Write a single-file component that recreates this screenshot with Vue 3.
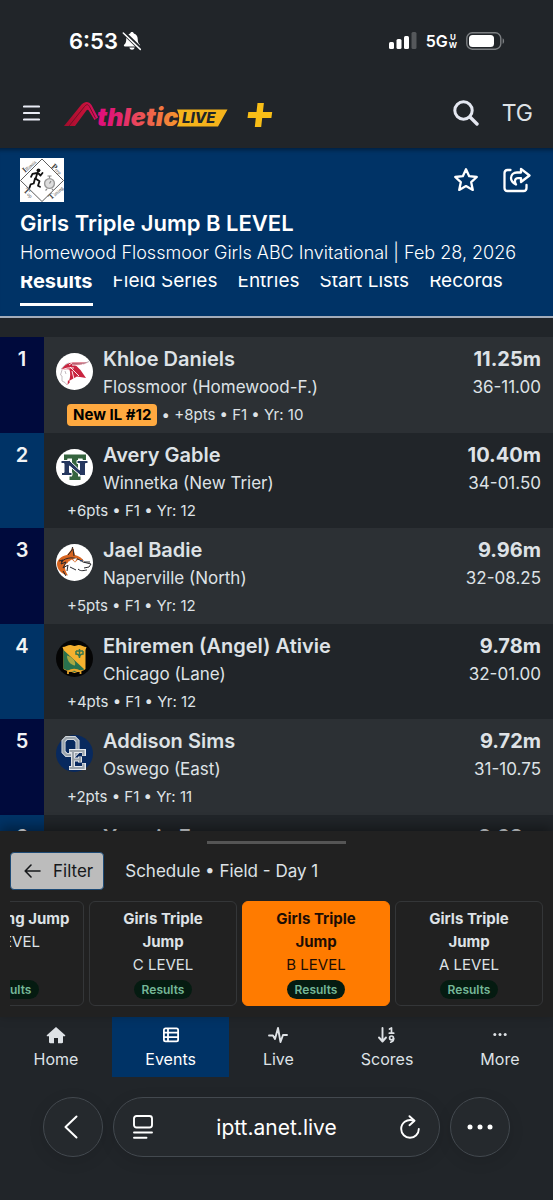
<template>
  <div class="screen">
    <!-- Phone status bar -->
    <div class="status-bar">
      <div class="status-time">
        <span>6:53</span>
        <svg width="20" height="20" viewBox="0 0 20 20" aria-hidden="true">
          <path d="M10 1c.9 0 1.600.6 1.800 1.400 2.500.7 3.900 2.700 3.900 5.300 0 3.500.8 4.700 2 5.800.8.8.5 2-.7 2H3c-1.200 0-1.500-1.200-.7-2 1.200-1.100 2-2.300 2-5.800 0-2.600 1.400-4.600 3.900-5.300C8.400 1.600 9.100 1 10 1z" fill="#fff" />
          <path d="M7.400 16.600h5.200c-.3 1.400-1.300 2.200-2.600 2.200s-2.300-.8-2.600-2.200z" fill="#fff" />
          <path d="M1.400 1.200l17.400 17" stroke="#212529" stroke-width="4" />
          <path d="M1.300 2l17 16.400" stroke="#fff" stroke-width="1.500" stroke-linecap="round" />
        </svg>
      </div>
      <div class="status-signals">
        <svg width="28" height="18" viewBox="0 0 28 18" aria-hidden="true">
          <rect x="0" y="10" width="5" height="7" rx="1.500" fill="#fff" />
          <rect x="7.500" y="7" width="5" height="10" rx="1.500" fill="#fff" />
          <rect x="15" y="4" width="5" height="13" rx="1.500" fill="#fff" />
          <rect x="22.500" y="0" width="5" height="17" rx="1.500" fill="#55585b" />
        </svg>
        <span class="network">5G<span class="network-band"><span>U</span><span>W</span></span></span>
        <svg width="39" height="18" viewBox="0 0 39 18" aria-hidden="true">
          <rect x=".8" y=".8" width="34" height="16.400" rx="5.500" fill="none" stroke="#7c7f82" stroke-width="1.400" />
          <rect x="3" y="3" width="25" height="12" rx="3.500" fill="#fff" />
          <path d="M36.600 6.200c2 .6 2 5 0 5.600z" fill="#7c7f82" />
        </svg>
      </div>
    </div>

    <!-- App bar -->
    <header class="app-bar">
      <button type="button" class="icon-btn" aria-label="Menu">
        <svg width="17" height="16" viewBox="0 0 17 16">
          <path d="M1 1.500h15M1 8h15M1 14.500h15" stroke="#e9ecf5" stroke-width="2.200" stroke-linecap="round" />
        </svg>
      </button>
      <a href="#" class="brand" aria-label="AthleticLIVE home">
        <svg width="165" height="28" viewBox="0 0 165 28">
          <defs>
            <linearGradient id="wordmark" x1="32" x2="116" y1="0" y2="0" gradientUnits="userSpaceOnUse">
              <stop offset="0" stop-color="#df0b7d" />
              <stop offset=".25" stop-color="#e01f72" />
              <stop offset=".6" stop-color="#ee5b50" />
              <stop offset="1" stop-color="#f69a2b" />
            </linearGradient>
            <linearGradient id="peak" x1="0" x2="34" y1="0" y2="0" gradientUnits="userSpaceOnUse">
              <stop offset="0" stop-color="#a00d2c" />
              <stop offset=".6" stop-color="#c41238" />
              <stop offset="1" stop-color="#d80f6c" />
            </linearGradient>
          </defs>
          <path d="M0 25L17.500 3.500C21 -.2 25 .2 27.500 4L34 16.500l-3.500 2.500-5.500-9c-.8-1.600-1.900-1.600-3 0L11 25z" fill="url(#peak)" />
          <path d="M5 25L20.500 5.500c2-2.500 3.500-2.500 4.900 0l6.300 12" fill="none" stroke="#701027" stroke-width="1" />
          <text x="33" y="25" class="wordmark" fill="url(#wordmark)">thletic</text>
          <path d="M113 8.500h50.500L154 25.500h-41q4.500-8 0-17z" fill="#f5b31b" />
          <text x="118" y="22" class="wordmark-live" fill="#212529">LIVE</text>
        </svg>
      </a>
      <button type="button" class="icon-btn plus-btn" aria-label="Plus">
        <svg width="26" height="26" viewBox="0 0 26 26">
          <path d="M10.500 1h6.400l-1 9h9.300l-.8 6h-9.200l-1 9H7.800l1-9H.5l.8-6h8.200z" fill="#f8be17" />
        </svg>
      </button>
      <button type="button" class="icon-btn search-btn" aria-label="Search">
        <svg width="26" height="26" viewBox="0 0 26 26">
          <circle cx="10.500" cy="10.500" r="8.700" fill="none" stroke="#e4e7f0" stroke-width="3" />
          <path d="M17 17l7 7" stroke="#e4e7f0" stroke-width="3.400" stroke-linecap="round" />
        </svg>
      </button>
      <button type="button" class="icon-btn user-btn">TG</button>
    </header>

    <!-- Event header -->
    <section class="event-header">
      <div class="event-top">
        <svg class="meet-logo" width="44" height="44" viewBox="0 0 44 44" aria-label="Illinois Prep Top Timing">
          <rect width="44" height="44" fill="#fff" />
          <path d="M22 1l21.500 21.500L22 43.500.5 22.500z" fill="none" stroke="#333" stroke-width=".8" />
          <text class="meet-text" transform="translate(5 15) rotate(-42)"><tspan class="meet-initial">I</tspan>llinois</text>
          <text class="meet-text" transform="translate(31 9) rotate(43)"><tspan class="meet-initial">P</tspan>rep</text>
          <text class="meet-text" transform="translate(3 33) rotate(45)"><tspan class="meet-initial">T</tspan>op</text>
          <text class="meet-text" transform="translate(31 42) rotate(-42)"><tspan class="meet-initial">T</tspan>iming</text>
          <circle cx="18.500" cy="12.300" r="1.900" fill="#111" />
          <path d="M17.500 14.500l-2 6.500M17 15l-4.500.8-1.500 3M18 15l2.500 2.500 2-2.500M15.500 20.500l4 2.800-1.500 4.500 2 1M15 20.500l-1.300 5-3 .8-1.200 3.500" fill="none" stroke="#111" stroke-width="1.800" stroke-linejoin="round" stroke-linecap="round" />
          <circle cx="29.500" cy="25.500" r="4.900" fill="#ddd" stroke="#999" stroke-width="1.400" />
          <path d="M29.500 20v-2M27.500 18h4M29.500 25.500l1.500-2.500M27 31l-1.500 1.500M32 31l1.500 1.500" stroke="#888" stroke-width="1.200" />
        </svg>
        <div class="event-actions">
          <button type="button" class="icon-btn" aria-label="Favorite">
            <svg width="26" height="26" viewBox="0 0 26 26">
              <path d="M13 2.200l3.200 7 7.600.8-5.600 5.200 1.600 7.700L13 19.100l-6.800 3.800 1.600-7.700L2.200 10l7.600-.8z" fill="none" stroke="#fff" stroke-width="2.300" stroke-linejoin="round" />
            </svg>
          </button>
          <button type="button" class="icon-btn" aria-label="Share">
            <svg width="28" height="26" viewBox="0 0 28 26" fill="none" stroke="#fff" stroke-width="2.300" stroke-linecap="round" stroke-linejoin="round">
              <path d="M7.500 3H4.500C2.500 3 1.500 4 1.500 6v15c0 2 1 3 3 3h16c2 0 3-1 3-3v-3" />
              <path d="M18 1.800L26.500 8.500 18 15v-3.800h-3c-3 0-4 2.800-2 6.300-3.500-1.800-5-4-5-6.500C8 8 10.500 5.500 14 5.500h4z" />
            </svg>
          </button>
        </div>
      </div>
      <h1 class="event-title">Girls Triple Jump B LEVEL</h1>
      <p class="event-subtitle">Homewood Flossmoor Girls ABC Invitational | Feb 28, 2026</p>
      <nav class="event-tabs" aria-label="Event sections">
        <a
          v-for="tab in tabs"
          :key="tab"
          href="#"
          class="event-tab"
          :class="{ active: tab === activeTab }"
          @click.prevent="activeTab = tab"
        >{{ tab }}</a>
      </nav>
    </section>

    <!-- Results -->
    <main class="results">
      <article v-for="row in results" :key="row.place" class="result">
        <div class="place">{{ row.place }}</div>
        <div class="result-body">
          <div class="result-main">
            <svg class="avatar" width="37" height="37" viewBox="0 0 37 37" aria-hidden="true">
              <template v-if="row.logo === 'viking'">
                <circle cx="18.500" cy="18.500" r="18.500" fill="#fff" />
                <path d="M5.500 17c2-5 7-8 13-7.500 5 .2 10 .2 14-.6-3 2.600-8 3.400-13 3.200l5 5 5.500 8-9-1.500-8 4.500c1.500-4 1.500-8 .5-11.500-3-.6-5.500-.5-8 .4z" fill="#c9243f" />
                <path d="M5 17.500c4-2.500 8-3 13-2.500M16 12c7 .5 12 0 17-3M14 14l9 9M16 18l2 8M13 12l3-2" stroke="#fff" stroke-width=".9" fill="none" />
                <path d="M6 17l-1.500 5 1.500 1v5l3 1.500 2 2.500M9 18l1 3M5 16c3-3 4-5 8-6M16 11c7 0 12 0 17-2.500" stroke="#b5aab0" stroke-width=".8" fill="none" />
                <path d="M12 27l2 2-2.500 3z" fill="#c9243f" />
              </template>
              <template v-else-if="row.logo === 'trier'">
                <circle cx="18.500" cy="18.500" r="18.500" fill="#fff" />
                <path d="M8 5.500h22v6h-3l-.5-2H22v18h2.500V31h-11v-3.500H16v-18h-4.500l-.5 2H8z" fill="#35643f" />
                <path d="M5 11.500h8.500l10 9.500v-6.500h-2.500v-3h11v3h-2.500v12h-5L13.500 17v6.500H16v3H5.500v-3H8v-9H5z" fill="#25375f" stroke="#fff" stroke-width="1" />
              </template>
              <template v-else-if="row.logo === 'husky'">
                <circle cx="18.500" cy="18.500" r="18.500" fill="#fff" />
                <path d="M1 20c0-4 4-8 10-9l4-5 2-3 2 8c4 1 7 3 9 6l-6-1.500-3 3-3-3c-3 1-4 3-2 5l-4-1c-2 3-1 7 2 12C5 30 1 25 1 20z" fill="#d86520" />
                <path d="M12 11l4-5 .5-3M17 5l1 7M5 18c5-5 14-6 22 0l8 2-2 3-5 1M3 17l4-1-2 4 5-2-3 6 5-3-1 6M22 25c3 3 7 1 9 1M14 23l6 3M7 27l3 5M28 18h6" stroke="#26262b" stroke-width="1" fill="none" />
                <path d="M17 15l4-1-2 4zM10 21l3-4 1 3z" fill="#fff" />
                <path d="M24 17l3-1" stroke="#2d4a7c" stroke-width="1" />
              </template>
              <template v-else-if="row.logo === 'shield'">
                <circle cx="18.500" cy="18.500" r="18.500" fill="#050505" />
                <path d="M6.500 7c3 0 5-2 8-2 2 0 2 1 4 1s2-1 4-1c3 0 5 2 8 2l-1 3v19c-3 3-7 2-11 4-4-2-7-1-11-4V10z" fill="#f5b12f" />
                <path d="M7.500 10l21 19.500c-3 1-6 .8-10 2.500-3.500-1.500-7-.5-11-3.500z" fill="#28714e" />
                <path d="M11 15.500c6 2 9 6 8 10-4-.5-8-4-8-10z" fill="#a9a842" />
                <path d="M20 11h7M23.500 9v9M20 11v3q3 0 3.500 3 .5-3 3.500-3v-3" fill="none" stroke="#36754d" stroke-width="1.500" />
                <path d="M12 34v-2.500q6-3.500 12.500 0V34" fill="none" stroke="#e9a52c" stroke-width="1.800" />
              </template>
              <template v-else-if="row.logo === 'oswego'">
                <circle cx="18.500" cy="18.500" r="18.500" fill="#08295e" />
                <path d="M10.500 3h8l3 3v11l-3 3h-8l-3-3V6z" fill="none" stroke="#e5e8ed" stroke-width="4" />
                <path d="M10.500 3h8l3 3v11l-3 3h-8l-3-3V6z" fill="none" stroke="#9aa3ab" stroke-width="2.400" />
                <path d="M13 16h15v5M13 33h15v-5M17 16v17M17 24.500h7m0-3v6" fill="none" stroke="#e5e8ed" stroke-width="4" />
                <path d="M13.500 16h14v4.500M13.500 33h14v-4.500M17 16v17M17 24.500h7m0-2.500v5" fill="none" stroke="#9aa3ab" stroke-width="2.200" />
              </template>
            </svg>
            <div class="athlete">
              <div class="athlete-name">{{ row.name }}</div>
              <div class="athlete-school">{{ row.school }}</div>
            </div>
            <div class="marks">
              <div class="mark">{{ row.mark }}</div>
              <div class="mark-alt">{{ row.alt }}</div>
            </div>
          </div>
          <div class="meta">
            <template v-if="row.badge"><span class="badge">{{ row.badge }}</span> • </template>{{ row.meta }}
          </div>
        </div>
      </article>
    </main>

    <!-- Schedule drawer -->
    <section class="drawer">
      <div class="drawer-handle"></div>
      <div class="drawer-head">
        <button type="button" class="filter-btn">
          <svg width="17" height="14" viewBox="0 0 17 14" aria-hidden="true">
            <path d="M16 7H1.500M7 1L1.200 7 7 13" fill="none" stroke="#16181b" stroke-width="1.600" stroke-linecap="round" stroke-linejoin="round" />
          </svg>
          Filter
        </button>
        <span class="drawer-title">Schedule • Field - Day 1</span>
      </div>
      <div class="cards">
        <a
          v-for="card in schedule"
          :key="card.event + card.level"
          href="#"
          class="card"
          :class="{ current: card.current }"
        >
          <span class="card-event">{{ card.event }}</span>
          <span class="card-level">{{ card.level }}</span>
          <span class="card-status">Results</span>
        </a>
      </div>
    </section>

    <!-- Bottom navigation -->
    <nav class="bottom-nav" aria-label="Main">
      <a v-for="item in navItems" :key="item.label" href="#" class="nav-item" :class="{ active: item.active }">
        <svg width="20" height="18" viewBox="0 0 20 18" aria-hidden="true">
          <path v-if="item.icon === 'home'" d="M10 1l9 8c.6.6.3 1.300-.5 1.300H17V16c0 .8-.4 1.200-1.200 1.200H12V12H8v5.200H4.200C3.400 17.200 3 16.800 3 16v-5.700H1.500C.7 10.300.4 9.600 1 9z" fill="currentColor" />
          <template v-else-if="item.icon === 'table'">
            <rect x="2.900" y="2.400" width="14.200" height="13" rx="1.600" fill="none" stroke="currentColor" stroke-width="1.800" />
            <path d="M3 6.700h14M3 11.100h14M7 3v12" stroke="currentColor" stroke-width="1.800" />
          </template>
          <path v-else-if="item.icon === 'pulse'" d="M1 9.500h4l2 3.500 3-11 2.500 14 2.500-7h4" fill="none" stroke="currentColor" stroke-width="1.900" stroke-linecap="round" stroke-linejoin="round" />
          <template v-else-if="item.icon === 'sort'">
            <path d="M5.500 2v13M2 11.500L5.500 15.500 9 11.500" fill="none" stroke="currentColor" stroke-width="1.900" stroke-linecap="round" stroke-linejoin="round" />
            <path d="M12.500 3l2-1v5M12.300 7.200h4.400M16.700 12.500c0 2-1.200 3.200-3 3.700" fill="none" stroke="currentColor" stroke-width="1.700" stroke-linecap="round" stroke-linejoin="round" />
            <circle cx="14.500" cy="11.900" r="1.900" fill="none" stroke="currentColor" stroke-width="1.700" />
          </template>
          <template v-else>
            <circle cx="4.800" cy="8.500" r="1.500" fill="currentColor" />
            <circle cx="10" cy="8.500" r="1.500" fill="currentColor" />
            <circle cx="15.200" cy="8.500" r="1.500" fill="currentColor" />
          </template>
        </svg>
        <span>{{ item.label }}</span>
      </a>
    </nav>

    <!-- Browser controls -->
    <div class="browser-bar">
      <button type="button" class="round-btn" aria-label="Back">
        <svg width="18" height="26" viewBox="0 0 18 26">
          <path d="M12.500 2.500L1.500 13l11 10.500" fill="none" stroke="#fff" stroke-width="2" stroke-linecap="round" stroke-linejoin="round" />
        </svg>
      </button>
      <div class="address">
        <button type="button" class="icon-btn" aria-label="Page options">
          <svg width="20" height="24" viewBox="0 0 20 24" fill="none" stroke="#fff" stroke-width="1.900" stroke-linecap="round">
            <rect x="1" y="1" width="18" height="11.500" rx="2.500" />
            <path d="M1 17.500h18M1 22.800h12.500" />
          </svg>
        </button>
        <input v-model="address" type="text" class="address-input" aria-label="Address" />
        <button type="button" class="icon-btn" aria-label="Reload">
          <svg width="20" height="24" viewBox="0 0 20 24" fill="none" stroke="#fff" stroke-width="1.900" stroke-linecap="round" stroke-linejoin="round">
            <path d="M13.500 5.500C6.500 3.300 1.200 8.500 1.200 14c0 5 4 8.800 8.800 8.800s8.800-3.800 8.800-8.800" />
            <path d="M9.500 1.200l5 4.500-5 4.500" />
          </svg>
        </button>
      </div>
      <button type="button" class="round-btn" aria-label="More options">
        <svg width="26" height="6" viewBox="0 0 26 6" fill="#fff">
          <circle cx="3" cy="3" r="2.500" />
          <circle cx="13" cy="3" r="2.500" />
          <circle cx="23" cy="3" r="2.500" />
        </svg>
      </button>
    </div>
  </div>
</template>

<script setup>
import { ref } from 'vue';

const tabs = ['Results', 'Field Series', 'Entries', 'Start Lists', 'Records'];
const activeTab = ref('Results');
const address = ref('iptt.anet.live');

const results = [
  { place: 1, name: 'Khloe Daniels', school: 'Flossmoor (Homewood-F.)', mark: '11.25m', alt: '36-11.00', badge: 'New IL #12', meta: '+8pts • F1 • Yr: 10', logo: 'viking' },
  { place: 2, name: 'Avery Gable', school: 'Winnetka (New Trier)', mark: '10.40m', alt: '34-01.50', meta: '+6pts • F1 • Yr: 12', logo: 'trier' },
  { place: 3, name: 'Jael Badie', school: 'Naperville (North)', mark: '9.96m', alt: '32-08.25', meta: '+5pts • F1 • Yr: 12', logo: 'husky' },
  { place: 4, name: 'Ehiremen (Angel) Ativie', school: 'Chicago (Lane)', mark: '9.78m', alt: '32-01.00', meta: '+4pts • F1 • Yr: 12', logo: 'shield' },
  { place: 5, name: 'Addison Sims', school: 'Oswego (East)', mark: '9.72m', alt: '31-10.75', meta: '+2pts • F1 • Yr: 11', logo: 'oswego' },
  { place: 6, name: 'Yazmin E', school: '', mark: '9.68m', alt: '', meta: '' },
];

const schedule = [
  { event: 'Girls Long Jump', level: 'A LEVEL' },
  { event: 'Girls Triple Jump', level: 'C LEVEL' },
  { event: 'Girls Triple Jump', level: 'B LEVEL', current: true },
  { event: 'Girls Triple Jump', level: 'A LEVEL' },
];

const navItems = [
  { label: 'Home', icon: 'home' },
  { label: 'Events', icon: 'table', active: true },
  { label: 'Live', icon: 'pulse' },
  { label: 'Scores', icon: 'sort' },
  { label: 'More', icon: 'more' },
];
</script>

<style>
body {
  background: #212529;
}
</style>

<style scoped>
.screen {
  display: flex;
  flex-direction: column;
  height: 100vh;
  overflow: hidden;
  background: #212529;
  color: #dee2e6;
  font-family: Inter, 'Liberation Sans', sans-serif;
  font-size: 17px;
}

.screen * {
  box-sizing: border-box;
}

a {
  color: inherit;
  text-decoration: none;
}

svg {
  display: block;
  flex-shrink: 0;
}

.icon-btn {
  padding: 0;
  border: 0;
  background: none;
  color: inherit;
  font-family: inherit;
  cursor: pointer;
}

/* status bar */
.status-bar {
  display: flex;
  align-items: center;
  justify-content: space-between;
  flex-shrink: 0;
  height: 82px;
  padding: 0 48px 0 69px;
  color: #fff;
}

.status-time {
  display: flex;
  align-items: center;
  gap: 4px;
  font-size: 22px;
  font-weight: 600;
}

.status-signals {
  display: flex;
  align-items: center;
  gap: 9px;
}

.network {
  display: flex;
  align-items: center;
  gap: 1px;
  font-size: 16px;
  font-weight: 600;
}

.network-band {
  display: flex;
  flex-direction: column;
  align-items: center;
  font-size: 8px;
  font-weight: 700;
  line-height: 8px;
}

/* app bar */
.app-bar {
  display: flex;
  align-items: center;
  flex-shrink: 0;
  height: 66px;
  padding: 0 20px 4px 23px;
}

.brand {
  margin: 3px 0 0 24px;
}

.wordmark {
  font-size: 25px;
  font-style: italic;
  font-weight: 900;
}

.wordmark-live {
  font-size: 15px;
  font-style: italic;
  font-weight: 800;
}

.plus-btn {
  margin: 4px 0 0 18px;
}

.search-btn {
  margin-left: auto;
}

.user-btn {
  margin-left: 23px;
  color: #dee2e6;
  font-size: 23px;
}

/* event header */
.event-header {
  flex-shrink: 0;
  padding: 10px 20px;
  border-bottom: 2px solid #a3acb9;
  background: #003366;
  box-shadow: inset 0 6px 4px -4px rgba(0, 0, 0, 0.4);
  color: #fff;
}

.event-top {
  display: flex;
  align-items: center;
  justify-content: space-between;
}

.meet-text {
  font-family: 'Liberation Serif', serif;
  font-size: 5px;
  fill: #444;
}

.meet-initial {
  font-size: 8px;
  font-weight: 700;
}

.event-actions {
  display: flex;
  align-items: center;
  gap: 24px;
  padding-right: 2px;
}

.event-title {
  margin: 5px 0 0;
  font-size: 22px;
  font-weight: 600;
  line-height: 32px;
  white-space: nowrap;
}

.event-subtitle {
  margin: 0;
  font-size: 18px;
  font-weight: 300;
  line-height: 28px;
  white-space: nowrap;
}

.event-tabs {
  display: flex;
  align-items: flex-end;
  gap: 20px;
  height: 30px;
  margin-top: 9px;
  overflow: hidden;
}

.event-tab {
  padding-bottom: 8px;
  border-bottom: 3px solid transparent;
  font-size: 19px;
  line-height: 28px;
  white-space: nowrap;
}

.event-tab.active {
  border-color: #fff;
  font-size: 20px;
  font-weight: 700;
}

/* results */
.results {
  flex: 1;
  min-height: 0;
  padding-top: 19px;
  overflow-y: auto;
  scrollbar-width: none;
}

.result {
  display: flex;
  min-height: 95px;
  background: #212529;
}

.result:nth-child(odd) {
  min-height: 96px;
  background: #2c3034;
}

.place {
  flex: 0 0 44px;
  padding-top: 8px;
  background: #003366;
  color: #f1f3f5;
  font-size: 20px;
  font-weight: 600;
  line-height: 28px;
  text-align: center;
}

.result:nth-child(odd) .place {
  background: #000a3c;
}

.result-body {
  flex: 1;
  min-width: 0;
  padding: 8px 12px 2px;
}

.result-main {
  display: flex;
  align-items: flex-start;
  gap: 10px;
}

.avatar {
  margin-top: 8px;
}

.athlete {
  flex: 1;
  min-width: 0;
}

.athlete-name,
.mark {
  font-size: 20px;
  font-weight: 600;
  line-height: 28px;
}

.mark {
  font-weight: 700;
}

.athlete-school,
.mark-alt {
  line-height: 28px;
}

.marks {
  text-align: right;
}

.meta {
  padding-left: 11px;
  font-size: 15px;
  line-height: 28px;
}

.badge {
  display: inline-block;
  padding: 0 6px;
  border-radius: 4px;
  background: #ffa940;
  color: #000;
  font-weight: 700;
  line-height: 22px;
}

/* schedule drawer */
.drawer {
  position: relative;
  flex-shrink: 0;
  padding: 10px 10px 11px;
  background: #212121;
  box-shadow: 0 -4px 12px rgba(0, 0, 0, 0.4);
}

.drawer-handle {
  width: 26%;
  height: 3px;
  margin: 0 auto 8px;
  background: #555;
}

.drawer-head {
  display: flex;
  align-items: center;
  gap: 21px;
  margin-bottom: 11px;
}

.filter-btn {
  display: flex;
  align-items: center;
  gap: 12px;
  height: 38px;
  padding: 0 10px 0 13px;
  border: 1px solid #1d4a75;
  border-radius: 4px;
  background: #bcbcbc;
  color: #16181b;
  font-family: inherit;
  font-size: 17px;
}

.cards {
  display: flex;
  justify-content: flex-end;
  gap: 5px;
  overflow: hidden;
}

.card {
  display: flex;
  flex: 0 0 148px;
  flex-direction: column;
  align-items: center;
  height: 105px;
  padding: 5px 12px 6px;
  border: 1px solid #343638;
  border-radius: 6px;
  font-size: 15px;
  line-height: 23px;
  text-align: center;
}

.card.current {
  border-color: #ff7b00;
  background: #ff7b00;
  color: #1d0d05;
}

.card-event {
  font-weight: 700;
}

.card-status {
  margin-top: auto;
  padding: 0 8px;
  border-radius: 10px;
  background: #051b11;
  color: #75b798;
  font-size: 12px;
  font-weight: 600;
  line-height: 19px;
}

/* bottom navigation */
.bottom-nav {
  display: flex;
  flex-shrink: 0;
}

.nav-item {
  display: flex;
  flex: 1 1 auto;
  flex-direction: column;
  align-items: center;
  gap: 3px;
  padding: 9px 0 6px;
  font-size: 16px;
  line-height: 24px;
}

.nav-item.active {
  background: #003366;
  color: #fff;
}

/* browser controls */
.browser-bar {
  display: flex;
  flex-shrink: 0;
  gap: 10px;
  padding: 20px 43px 43px;
}

.round-btn,
.address {
  display: flex;
  align-items: center;
  height: 60px;
  border: 1px solid #43494f;
  border-radius: 30px;
  background: #25292d;
  box-shadow: 0 4px 16px rgba(0, 0, 0, 0.1);
}

.round-btn {
  flex: 0 0 60px;
  justify-content: center;
  padding: 0;
}

.address {
  flex: 1;
  min-width: 0;
  padding: 0 19px;
}

.address-input {
  flex: 1;
  min-width: 0;
  padding: 0;
  border: 0;
  outline: 0;
  background: none;
  color: #fff;
  font-family: inherit;
  font-size: 21px;
  text-align: center;
}
</style>
